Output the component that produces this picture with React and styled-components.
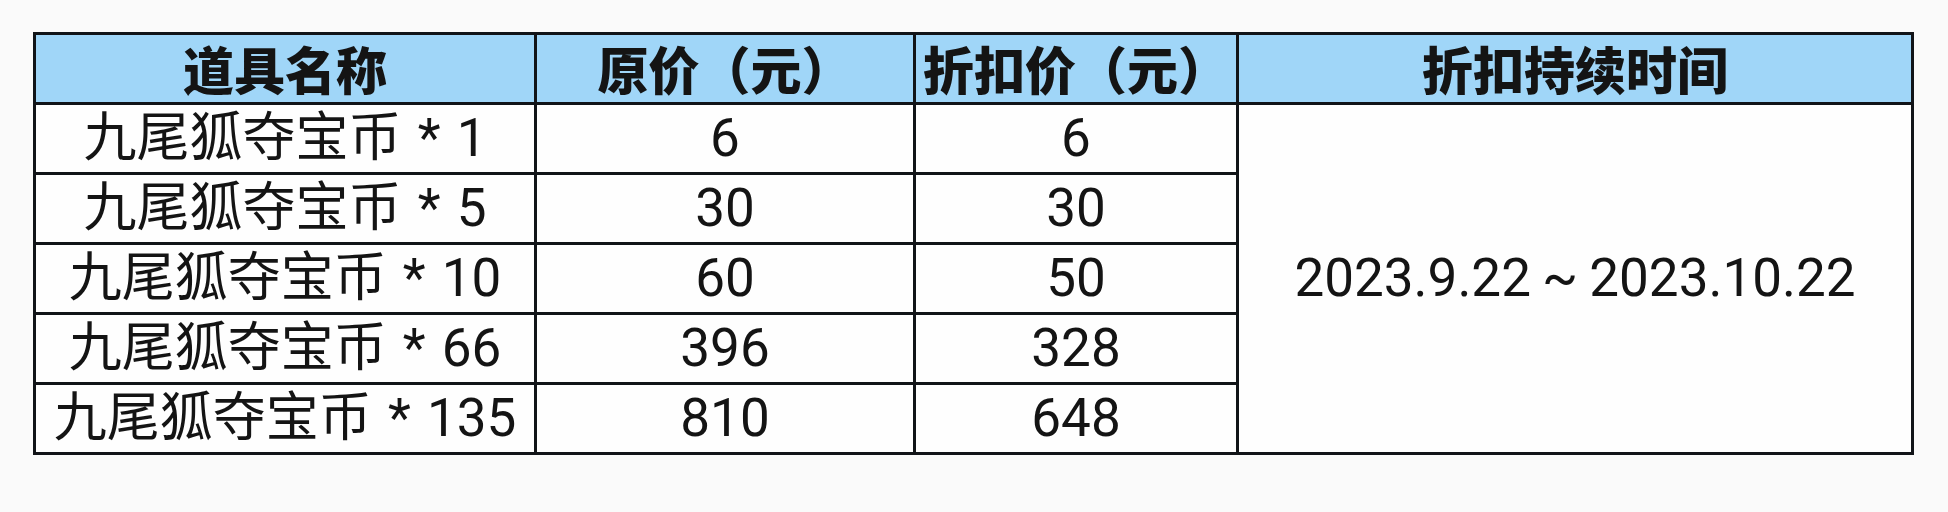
import React from "react";
import styled, { createGlobalStyle } from "styled-components";

const GlobalStyle = createGlobalStyle`
  html, body {
    margin: 0;
    padding: 0;
    background: #fafafa;
  }
`;

const Page = styled.div`
  width: 1948px;
  height: 512px;
  padding: 32px 0 0 33px;
  box-sizing: border-box;
  background: #fafafa;
`;

const Table = styled.table`
  width: 1878px;
  table-layout: fixed;
  border-collapse: collapse;
  border: 3px solid #111418;
  font-family: Roboto, "Noto Sans CJK SC", sans-serif;
  color: #141414;
`;

const Col = styled.col`
  width: ${(p) => p.$w}px;
`;

const Row = styled.tr`
  height: 70px;
`;

const HeadCell = styled.th`
  background: #a0d6f8;
  border: 3px solid #111418;
  padding: 0;
  font-family: "Noto Sans CJK SC", sans-serif;
  font-size: 51px;
  font-weight: 900;
  line-height: 1;
  text-align: center;
  vertical-align: middle;
`;

const Cell = styled.td`
  background: #fefefe;
  border: 3px solid #111418;
  padding: 0;
  font-size: 53px;
  font-weight: 400;
  line-height: 1;
  word-spacing: ${(p) => (p.$tight ? "-2px" : "3px")};
  text-align: center;
  vertical-align: middle;
  white-space: nowrap;
`;

const items = [
  { count: 1, price: 6, discount: 6 },
  { count: 5, price: 30, discount: 30 },
  { count: 10, price: 60, discount: 50 },
  { count: 66, price: 396, discount: 328 },
  { count: 135, price: 810, discount: 648 },
];

const columns = [501, 379, 323, 675];

const App = () => {
  return (
    <Page>
      <GlobalStyle />
      <Table>
        <colgroup>
          {columns.map((w, i) => (
            <Col key={i} $w={w} />
          ))}
        </colgroup>
        <thead>
          <Row>
            <HeadCell>道具名称</HeadCell>
            <HeadCell>原价（元）</HeadCell>
            <HeadCell>折扣价（元）</HeadCell>
            <HeadCell>折扣持续时间</HeadCell>
          </Row>
        </thead>
        <tbody>
          {items.map((item, i) => (
            <Row key={item.count}>
              <Cell>九尾狐夺宝币 * {item.count}</Cell>
              <Cell>{item.price}</Cell>
              <Cell>{item.discount}</Cell>
              {i === 0 && (
                <Cell $tight rowSpan={items.length}>
                  2023.9.22 ~ 2023.10.22
                </Cell>
              )}
            </Row>
          ))}
        </tbody>
      </Table>
    </Page>
  );
};

export default App;
